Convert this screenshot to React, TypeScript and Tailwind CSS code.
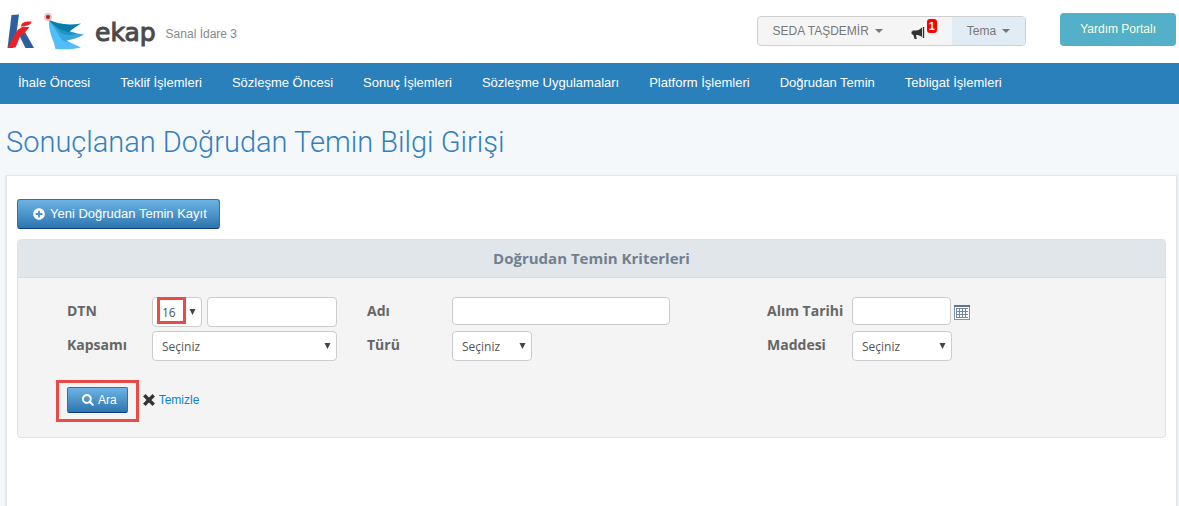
import type { ReactNode } from 'react'
import { FaPlusCircle, FaSearch } from 'react-icons/fa'

const menu = [
  'İhale Öncesi',
  'Teklif İşlemleri',
  'Sözleşme Öncesi',
  'Sonuç İşlemleri',
  'Sözleşme Uygulamaları',
  'Platform İşlemleri',
  'Doğrudan Temin',
  'Tebligat İşlemleri',
]

const inputClass = 'h-7 rounded border border-[#ccc] bg-white px-2 text-xs text-[#555]'

function Logo() {
  return (
    <div className="flex items-start">
      <svg width="28" height="36" viewBox="0 0 28 36" aria-hidden="true">
        <path d="M4.5 2 L12 1.5 L9.5 20 L6 35 L0.5 35 Z" fill="#2f5f9f" />
        <path d="M12 22 L18 19 L27 35 L18.5 35 Z" fill="#2f5f9f" />
        <path d="M10.5 17 L15 14 L22.5 14 L17.5 20 L13 23.5 L8.5 34.5 L0.8 34.5 L6 25 Z" fill="#ec2027" />
        <path d="M14 13.5 C14 9 19 8 24.5 8.5 C24 11.5 21 12.5 17 13.5 Z" fill="#ec2027" />
      </svg>
      <svg width="42" height="37" viewBox="0 0 42 37" className="ml-2" aria-hidden="true">
        <path d="M6 7 L24 28 L38 34.5 C30 36.5 20 36.5 12.5 36 C11 27 5 19 6 7 Z" fill="#52bdf8" />
        <path d="M6 7 L24 19 L41 21.5 C36 24.5 30 26.5 24 27.5 L26 30 L19 27 Z" fill="#36a6dc" />
        <path d="M6 7 L26 18 L34 20.5 C28 23 22 22 18 20 Z" fill="#2093c4" />
        <path d="M6 7 C15 11 25 12.5 38 10.5 C33 13.5 29 16.5 26 19 C18 17 12 14 6 7 Z" fill="#087da9" />
        <circle cx="5" cy="4" r="4" fill="#e5c3c3" />
        <circle cx="5" cy="4" r="2" fill="#b5161d" />
      </svg>
      <span className="ml-[10px] font-['DejaVu_Sans'] text-[25px] leading-10 text-[#4a4a4a] [-webkit-text-stroke:1px_#4a4a4a]">
        ekap
      </span>
    </div>
  )
}

function Caret() {
  return <span className="border-x-4 border-t-4 border-x-transparent border-t-[#777]" />
}

function Select({ id, label, value, className }: { id: string; label?: string; value: string; className: string }) {
  return (
    <div className={`relative ${className}`}>
      <select
        id={id}
        aria-label={label}
        className="h-[30px] w-full appearance-none rounded border border-[#ccc] bg-white px-[9px] pt-[2px] font-['Open_Sans',sans-serif] text-xs text-[#555]"
      >
        <option>{value}</option>
      </select>
      <svg width="7" height="6" viewBox="0 0 7 6" className="pointer-events-none absolute top-3 right-[6px]" aria-hidden="true">
        <path d="M0.5 0 H6.5 L3.5 6 Z" fill="#444" />
      </svg>
    </div>
  )
}

function Field({ id, label, children }: { id: string; label: string; children: ReactNode }) {
  return (
    <div className="flex items-start">
      <label htmlFor={id} className="w-[85px] shrink-0 pt-1 font-['Open_Sans',sans-serif] text-sm font-bold text-[#666]">
        {label}
      </label>
      {children}
    </div>
  )
}

function BullhornIcon() {
  return (
    <svg width="14" height="13" viewBox="0 0 14 13" className="mt-1 ml-[16px]" aria-hidden="true">
      <path d="M11 0.5 V10 C9 8.5 7 8 5 8 L5.8 12 H3.6 L2.4 8 H1.5 V7 H0.5 V4.5 H1.5 V3.5 H5 C7 3.5 9 2.5 11 0.5 Z" fill="#333" />
      <rect x="11.8" y="0" width="1.4" height="11" fill="#333" />
    </svg>
  )
}

function ClearIcon() {
  return (
    <svg width="12" height="12" viewBox="0 0 12 12" aria-hidden="true">
      <path d="M2.5 2.5 L9.5 9.5 M9.5 2.5 L2.5 9.5" stroke="#333" strokeWidth="3.4" strokeLinecap="square" />
    </svg>
  )
}

function CalendarIcon() {
  return (
    <svg width="16" height="15" viewBox="0 0 16 15" aria-hidden="true">
      <rect x="0.5" y="0.5" width="15" height="14" fill="#fff" stroke="#7f94a8" />
      <rect width="16" height="2" fill="#5d7690" />
      <rect x="2" y="3" width="12" height="10" fill="#73879c" />
      <g fill="#fff">
        {[3, 6, 9, 12].map((x) =>
          [4, 7, 10].map((y) => <rect key={`${x}-${y}`} x={x} y={y} width="2" height="2" />),
        )}
      </g>
    </svg>
  )
}

export default function App() {
  return (
    <div className="min-h-screen bg-[#f4f8fb] font-['Liberation_Sans',Arial,sans-serif] text-[13px]">
      <header className="flex h-[63px] items-start bg-white pr-[3px] pl-[7px]">
        <div className="flex pt-[13px]">
          <Logo />
          <span className="pt-3 pl-[10px] text-xs leading-[18px] text-[#888]">Sanal İdare 3</span>
        </div>

        <div className="ml-auto flex items-start pt-[13px]">
          <div className="mt-[3px] flex h-[30px] overflow-hidden rounded border border-[#d0d0d0] bg-[#f5f5f5] text-xs text-[#777]">
            <button type="button" className="flex items-center gap-[6px] pr-3 pl-[15px]">
              SEDA TAŞDEMİR <Caret />
            </button>
            <button type="button" aria-label="Duyurular" className="relative w-[57px]">
              <BullhornIcon />
              <span className="absolute top-[2px] left-[32px] rounded-[3px] bg-[#f00] px-[2px] text-[11px] leading-[14px] font-bold text-white">
                1
              </span>
            </button>
            <button type="button" className="flex items-center gap-[6px] bg-[#e2ecf5] px-[15px]">
              Tema <Caret />
            </button>
          </div>
          <a href="#" className="ml-[34px] h-[33px] rounded bg-[#54b0c8] px-5 text-xs leading-8 text-[#fffde0]">
            Yardım Portalı
          </a>
        </div>
      </header>

      <nav className="flex h-[41px] items-center gap-[30px] bg-[#2a80bb] px-[18px] pb-[2px] text-[13px] text-white">
        {menu.map((item) => (
          <a key={item} href="#" className="whitespace-nowrap">
            {item}
          </a>
        ))}
      </nav>

      <h1 className="px-[6px] pt-[18px] pb-[13px] font-['Roboto',sans-serif] text-[29px] leading-10 font-light text-[#337fbd]">
        Sonuçlanan Doğrudan Temin Bilgi Girişi
      </h1>

      <main className="mr-[2px] ml-[6px] min-h-[340px] border border-[#e2e5e8] bg-white px-[10px] pt-[23px] shadow-sm">
        <button
          type="button"
          className="flex h-[30px] items-center gap-[5px] rounded-[3px] border border-[#2a74ad] border-b-[#0c3b82] bg-linear-to-b from-[#6db3e6] to-[#2c76ae] pr-3 pl-[15px] text-[13px] text-white"
        >
          <FaPlusCircle size={12} />
          Yeni Doğrudan Temin Kayıt
        </button>

        <section className="mt-[10px] rounded border border-[#dfe1e3] bg-[#f4f4f4]">
          <h2 className="h-[38px] border-b border-[#d9dcdf] bg-[#e1e6ea] text-center font-['Open_Sans',sans-serif] text-[15px] leading-[37px] font-bold text-[#708090]">
            Doğrudan Temin Kriterleri
          </h2>
          <form className="pt-[19px] pb-6 pl-[49px]">
            <div className="grid grid-cols-[300fr_400fr_398fr] gap-y-1">
              <Field id="dtn" label="DTN">
                <div className="relative">
                  <Select id="dtn-yil" label="DTN yılı" value="16" className="w-[50px]" />
                  <span className="pointer-events-none absolute top-0 left-[5px] h-[27px] w-[29px] border-3 border-[#e84c47]" />
                </div>
                <input id="dtn" type="text" className={`${inputClass} ml-[5px] min-h-[30px] w-[130px]`} />
              </Field>
              <Field id="adi" label="Adı">
                <input id="adi" type="text" className={`${inputClass} w-[218px]`} />
              </Field>
              <Field id="tarih" label="Alım Tarihi">
                <input id="tarih" type="text" className={`${inputClass} w-[99px]`} />
                <button type="button" aria-label="Tarih seç" className="mt-2 ml-[3px]">
                  <CalendarIcon />
                </button>
              </Field>
              <Field id="kapsam" label="Kapsamı">
                <Select id="kapsam" value="Seçiniz" className="w-[185px]" />
              </Field>
              <Field id="tur" label="Türü">
                <Select id="tur" value="Seçiniz" className="w-20" />
              </Field>
              <Field id="madde" label="Maddesi">
                <Select id="madde" value="Seçiniz" className="w-[100px]" />
              </Field>
            </div>

            <div className="mt-[26px] flex items-center">
              <div className="relative">
                <button
                  type="submit"
                  className="flex h-[26px] items-center gap-1 rounded-[2px] border border-[#2a74ad] border-b-[#0c3b82] bg-linear-to-b from-[#6db3e6] to-[#2c76ae] pr-[10px] pl-[14px] text-xs text-white"
                >
                  <FaSearch size={12} />
                  Ara
                </button>
                <span className="pointer-events-none absolute -inset-x-[11px] -top-[7px] -bottom-[9px] border-3 border-[#e84c47]" />
              </div>
              <a href="#" className="ml-[15px] flex items-center gap-1 text-xs text-[#0a84cc]">
                <ClearIcon />
                Temizle
              </a>
            </div>
          </form>
        </section>
      </main>
    </div>
  )
}
